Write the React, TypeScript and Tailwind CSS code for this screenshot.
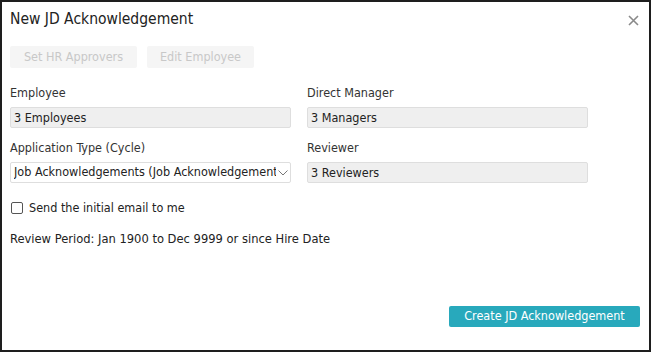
import React from "react";

const font = { fontFamily: '"DejaVu Sans Condensed", "DejaVu Sans", Tahoma, sans-serif' };

function Field({ label, value }: { label: string; value: string }) {
  return (
    <div className="flex flex-col">
      <div className="h-[18px] leading-[18px] text-[12.5px] text-[#333]">{label}</div>
      <div className="mt-[5px] h-[21px] leading-[19px] border border-[#dedede] bg-[#efefef] rounded-[2px] pl-[3px] text-[12.5px] text-[#222]">
        {value}
      </div>
    </div>
  );
}

export default function App() {
  return (
    <div style={font} className="w-[651px] h-[352px] bg-white border-2 border-[#1e1e1e] flex flex-col pl-[8px] pr-[9px]">
      <div className="h-[36px] flex items-center justify-between">
        <h1 className="text-[15.5px] text-[#222] font-normal">New JD Acknowledgement</h1>
        <svg width="11" height="11" viewBox="0 0 11 11" className="mr-[1px]">
          <path d="M1 1 L10 10 M10 1 L1 10" stroke="#8a8a8a" strokeWidth="1.6" />
        </svg>
      </div>

      <div className="mt-[8px] flex gap-[10px]">
        <button className="h-[22px] w-[127px] bg-[#f5f5f5] text-[#c8c8c8] text-[12.5px] rounded-[2px]">
          Set HR Approvers
        </button>
        <button className="h-[22px] w-[107px] bg-[#f5f5f5] text-[#c8c8c8] text-[12.5px] rounded-[2px]">
          Edit Employee
        </button>
      </div>

      <div className="mt-[16px] grid grid-cols-[281px_281px] gap-x-[16px] gap-y-[11px]">
        <Field label="Employee" value="3 Employees" />
        <Field label="Direct Manager" value="3 Managers" />
        <div className="flex flex-col">
          <div className="h-[18px] leading-[18px] text-[12.5px] text-[#333]">Application Type (Cycle)</div>
          <div className="mt-[5px] h-[21px] border border-[#dedede] bg-white rounded-[2px] pl-[3px] flex items-center text-[12.5px] text-[#222]">
            <span className="flex-1 overflow-hidden whitespace-nowrap">
              Job Acknowledgements (Job Acknowledgements)
            </span>
            <svg width="10" height="6" viewBox="0 0 10 6" className="mx-[2px] shrink-0">
              <path d="M0.5 0.5 L5 5 L9.5 0.5" fill="none" stroke="#777" strokeWidth="1" />
            </svg>
          </div>
        </div>
        <Field label="Reviewer" value="3 Reviewers" />
      </div>

      <div className="mt-[16px] h-[18px] flex items-center gap-[6px] text-[12.5px] text-[#222]">
        <span className="ml-[1px] w-[12px] h-[12px] border border-[#555] rounded-[2px] bg-white" />
        <span>Send the initial email to me</span>
      </div>

      <div className="mt-[13px] h-[18px] leading-[18px] text-[12.8px] text-[#222]">
        Review Period: Jan 1900 to Dec 9999 or since Hire Date
      </div>

      <div className="mt-auto mb-[23px] flex justify-end">
        <button className="h-[21px] w-[191px] bg-[#28a9bc] text-white text-[12.5px] rounded-[2px]">
          Create JD Acknowledgement
        </button>
      </div>
    </div>
  );
}
